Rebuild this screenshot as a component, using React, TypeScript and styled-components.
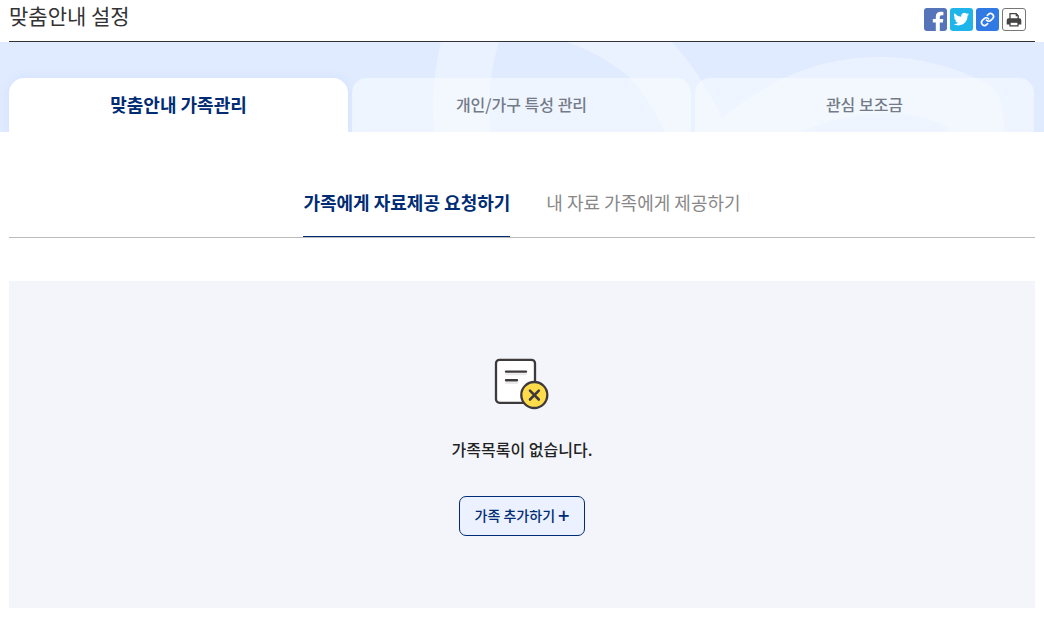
import React from "react";
import styled, { createGlobalStyle } from "styled-components";

const NAVY = "#002c74";

const GlobalStyle = createGlobalStyle`
  *, *::before, *::after { box-sizing: border-box; }
  body {
    margin: 0;
    background: #fff;
    color: #222;
    font-family: "Noto Sans CJK KR", "Noto Sans", sans-serif;
    font-size: 16px;
    line-height: 24px;
  }
  button { font: inherit; cursor: pointer; }
  a { color: inherit; text-decoration: none; }
`;

const Header = styled.header`
  display: flex;
  justify-content: space-between;
  align-items: flex-start;
  height: 42px;
  margin: 0 9px;
  border-bottom: 1px solid #333;
`;

const Title = styled.h1`
  margin: 0;
  font-size: 21px;
  line-height: 30px;
  font-weight: 400;
  color: #333;
`;

const Tools = styled.div`
  display: flex;
  gap: 3px;
  padding: 8px 9px 0 0;
`;

const ToolButton = styled.button<{ $bg: string; $outlined?: boolean }>`
  width: ${(p) => (p.$outlined ? 24 : 23)}px;
  height: 23px;
  padding: 0;
  border: ${(p) => (p.$outlined ? "1px solid #777" : "0")};
  border-radius: 3px;
  background: ${(p) => p.$bg};
  overflow: hidden;

  svg { display: block; width: 100%; height: 100%; }
`;

const Band = styled.div`
  position: relative;
  padding: 36px 10px 0 9px;
  background: #e0ebff;
  overflow: hidden;
`;

const BandArt = styled.svg`
  position: absolute;
  inset: 0;
  width: 100%;
  height: 100%;
`;

const MainTabs = styled.nav`
  position: relative;
  display: grid;
  grid-template-columns: repeat(3, 1fr);
  gap: 4px;
`;

const MainTab = styled.a<{ $active?: boolean }>`
  display: flex;
  align-items: center;
  justify-content: center;
  height: 54px;
  padding-bottom: 3px;
  border-radius: 15px 15px 0 0;
  background: ${(p) => (p.$active ? "#fff" : "rgba(252, 255, 255, 0.52)")};
  box-shadow: ${(p) => (p.$active ? "0 0 12px rgba(60, 110, 200, 0.08)" : "none")};
  color: ${(p) => (p.$active ? NAVY : "#747b88")};
  font-size: ${(p) => (p.$active ? 18 : 16)}px;
  font-weight: ${(p) => (p.$active ? 700 : 500)};
`;

const SubTabs = styled.nav`
  display: flex;
  justify-content: center;
  gap: 36px;
  margin: 36px 9px 0;
  border-bottom: 1px solid #bbb;
`;

const SubTab = styled.a<{ $active?: boolean }>`
  height: 69px;
  padding-top: 22px;
  border-bottom: 1px solid ${(p) => (p.$active ? NAVY : "transparent")};
  color: ${(p) => (p.$active ? NAVY : "#888")};
  font-size: 18px;
  font-weight: ${(p) => (p.$active ? 700 : 400)};
`;

const EmptyPanel = styled.section`
  display: flex;
  flex-direction: column;
  align-items: center;
  margin: 43px 9px 11px;
  padding: 76px 16px 72px;
  background: #f3f5fa;
`;

const EmptyText = styled.p`
  margin: 26px 0 35px;
  font-weight: 500;
`;

const AddButton = styled.button`
  display: flex;
  align-items: center;
  gap: 3px;
  height: 40px;
  padding: 0 15px 3px;
  border: 1px solid ${NAVY};
  border-radius: 7px;
  background: #ebf1ff;
  color: ${NAVY};
  font-size: 14px;
  font-weight: 500;
`;

const Plus = styled.span`
  font-size: 20px;
  line-height: 20px;
`;

const EmptyIcon = () => (
  <svg width="56" height="54" viewBox="0 0 56 54" fill="none" strokeLinecap="round" aria-hidden="true">
    <rect x="2" y="2.8" width="39" height="43" rx="3.5" fill="#fff" stroke="#3e3a3c" strokeWidth="2.3" />
    <path d="M12 17.300h20M12 26h11" stroke="#e9e9eb" strokeWidth="2" />
    <path d="M12 14.600h20M12 23.200h11" stroke="#3e3a3c" strokeWidth="2.400" />
    <circle cx="40.300" cy="38" r="13" fill="#ffdd4a" stroke="#3e3a3c" strokeWidth="2.300" />
    <path d="M36 33.700l8.800 8.800M44.800 33.700L36 42.500" stroke="#3e3a3c" strokeWidth="2.600" />
  </svg>
);

export default function App() {
  return (
    <>
      <GlobalStyle />
      <Header>
        <Title>맞춤안내 설정</Title>
        <Tools>
          <ToolButton type="button" $bg="#5674b9" aria-label="페이스북 공유">
            <svg viewBox="0 0 23 23">
              <path fill="#fff" d="M11.800 23v-8.400H8.800v-3.500h3V8.900c0-3.400 1.900-5.100 4.900-5.100 1.200 0 2.200.1 2.700.2v3.300h-1.700c-1.500 0-1.900.7-1.900 1.800v2h3.500l-.4 3.500h-3.100V23z" />
            </svg>
          </ToolButton>
          <ToolButton type="button" $bg="#1eb5ea" aria-label="트위터 공유">
            <svg viewBox="0 0 23 23">
              <path fill="#fff" transform="translate(3 2.900) scale(.68)" d="M23.600 4.900c-.8.4-1.700.6-2.700.8 1-.6 1.700-1.500 2.100-2.600-.9.5-1.900.9-3 1.100A4.700 4.700 0 0 0 12 8.500A13.400 13.400 0 0 1 2.200 3.600a4.700 4.700 0 0 0 1.500 6.300c-.8 0-1.500-.2-2.100-.6v.1c0 2.300 1.600 4.200 3.800 4.600-.7.2-1.400.2-2.100.1.600 1.900 2.300 3.200 4.400 3.300A9.500 9.500 0 0 1 .8 19.300a13.400 13.400 0 0 0 7.200 2.100c8.700 0 13.700-7.300 13.300-14.100.9-.6 1.700-1.500 2.300-2.400z" />
            </svg>
          </ToolButton>
          <ToolButton type="button" $bg="#3179e3" aria-label="링크 복사">
            <svg viewBox="0 0 23 23">
              <g transform="translate(4.300 4.300) scale(.6)" fill="none" stroke="#fff" strokeWidth="2.700" strokeLinecap="round">
                <path d="M10 13a5 5 0 0 0 7.540.540l3-3a5 5 0 0 0-7.070-7.070l-1.720 1.710" />
                <path d="M14 11a5 5 0 0 0-7.540-.540l-3 3a5 5 0 0 0 7.070 7.070l1.710-1.710" />
              </g>
            </svg>
          </ToolButton>
          <ToolButton type="button" $bg="#fff" $outlined aria-label="인쇄">
            <svg viewBox="0 0 22 21">
              <path d="M7 10V4.700h6.200l2 2V10" fill="#fff" stroke="#444" strokeWidth="1.300" />
              <path d="M12.700 4.500v2.700h2.800z" fill="#444" />
              <path d="M5.700 9.300h10.600a2 2 0 0 1 2 2v4.200H3.700v-4.200a2 2 0 0 1 2-2z" fill="#444" />
              <path d="M7 13.200h8v3.700H7z" fill="#fff" stroke="#444" strokeWidth="1.300" />
            </svg>
          </ToolButton>
        </Tools>
      </Header>

      <Band>
        <BandArt viewBox="0 0 1044 90" preserveAspectRatio="xMidYMin slice" aria-hidden="true">
          <path
            fill="#eaf1ff"
            d="M441 0H499C492 22 487 50 491 90H435C431 62 434 28 441 0zM567 0H672C684 14 696 28 705 45C712 57 718 66 722 76C765 42 812 15 880 15C920 15 955 25 988 42C1000 50 1004 62 1004 90H948V84C895 63 850 70 800 90H665C654 66 643 50 630 36C612 20 590 8 567 0z"
          />
        </BandArt>
        <MainTabs aria-label="맞춤안내 설정">
          <MainTab href="#family" $active aria-current="page">맞춤안내 가족관리</MainTab>
          <MainTab href="#traits">개인/가구 특성 관리</MainTab>
          <MainTab href="#subsidy">관심 보조금</MainTab>
        </MainTabs>
      </Band>

      <main>
        <SubTabs aria-label="가족관리">
          <SubTab href="#request" $active aria-current="page">가족에게 자료제공 요청하기</SubTab>
          <SubTab href="#provide">내 자료 가족에게 제공하기</SubTab>
        </SubTabs>
        <EmptyPanel>
          <EmptyIcon />
          <EmptyText>가족목록이 없습니다.</EmptyText>
          <AddButton type="button">가족 추가하기 <Plus>+</Plus></AddButton>
        </EmptyPanel>
      </main>
    </>
  );
}
